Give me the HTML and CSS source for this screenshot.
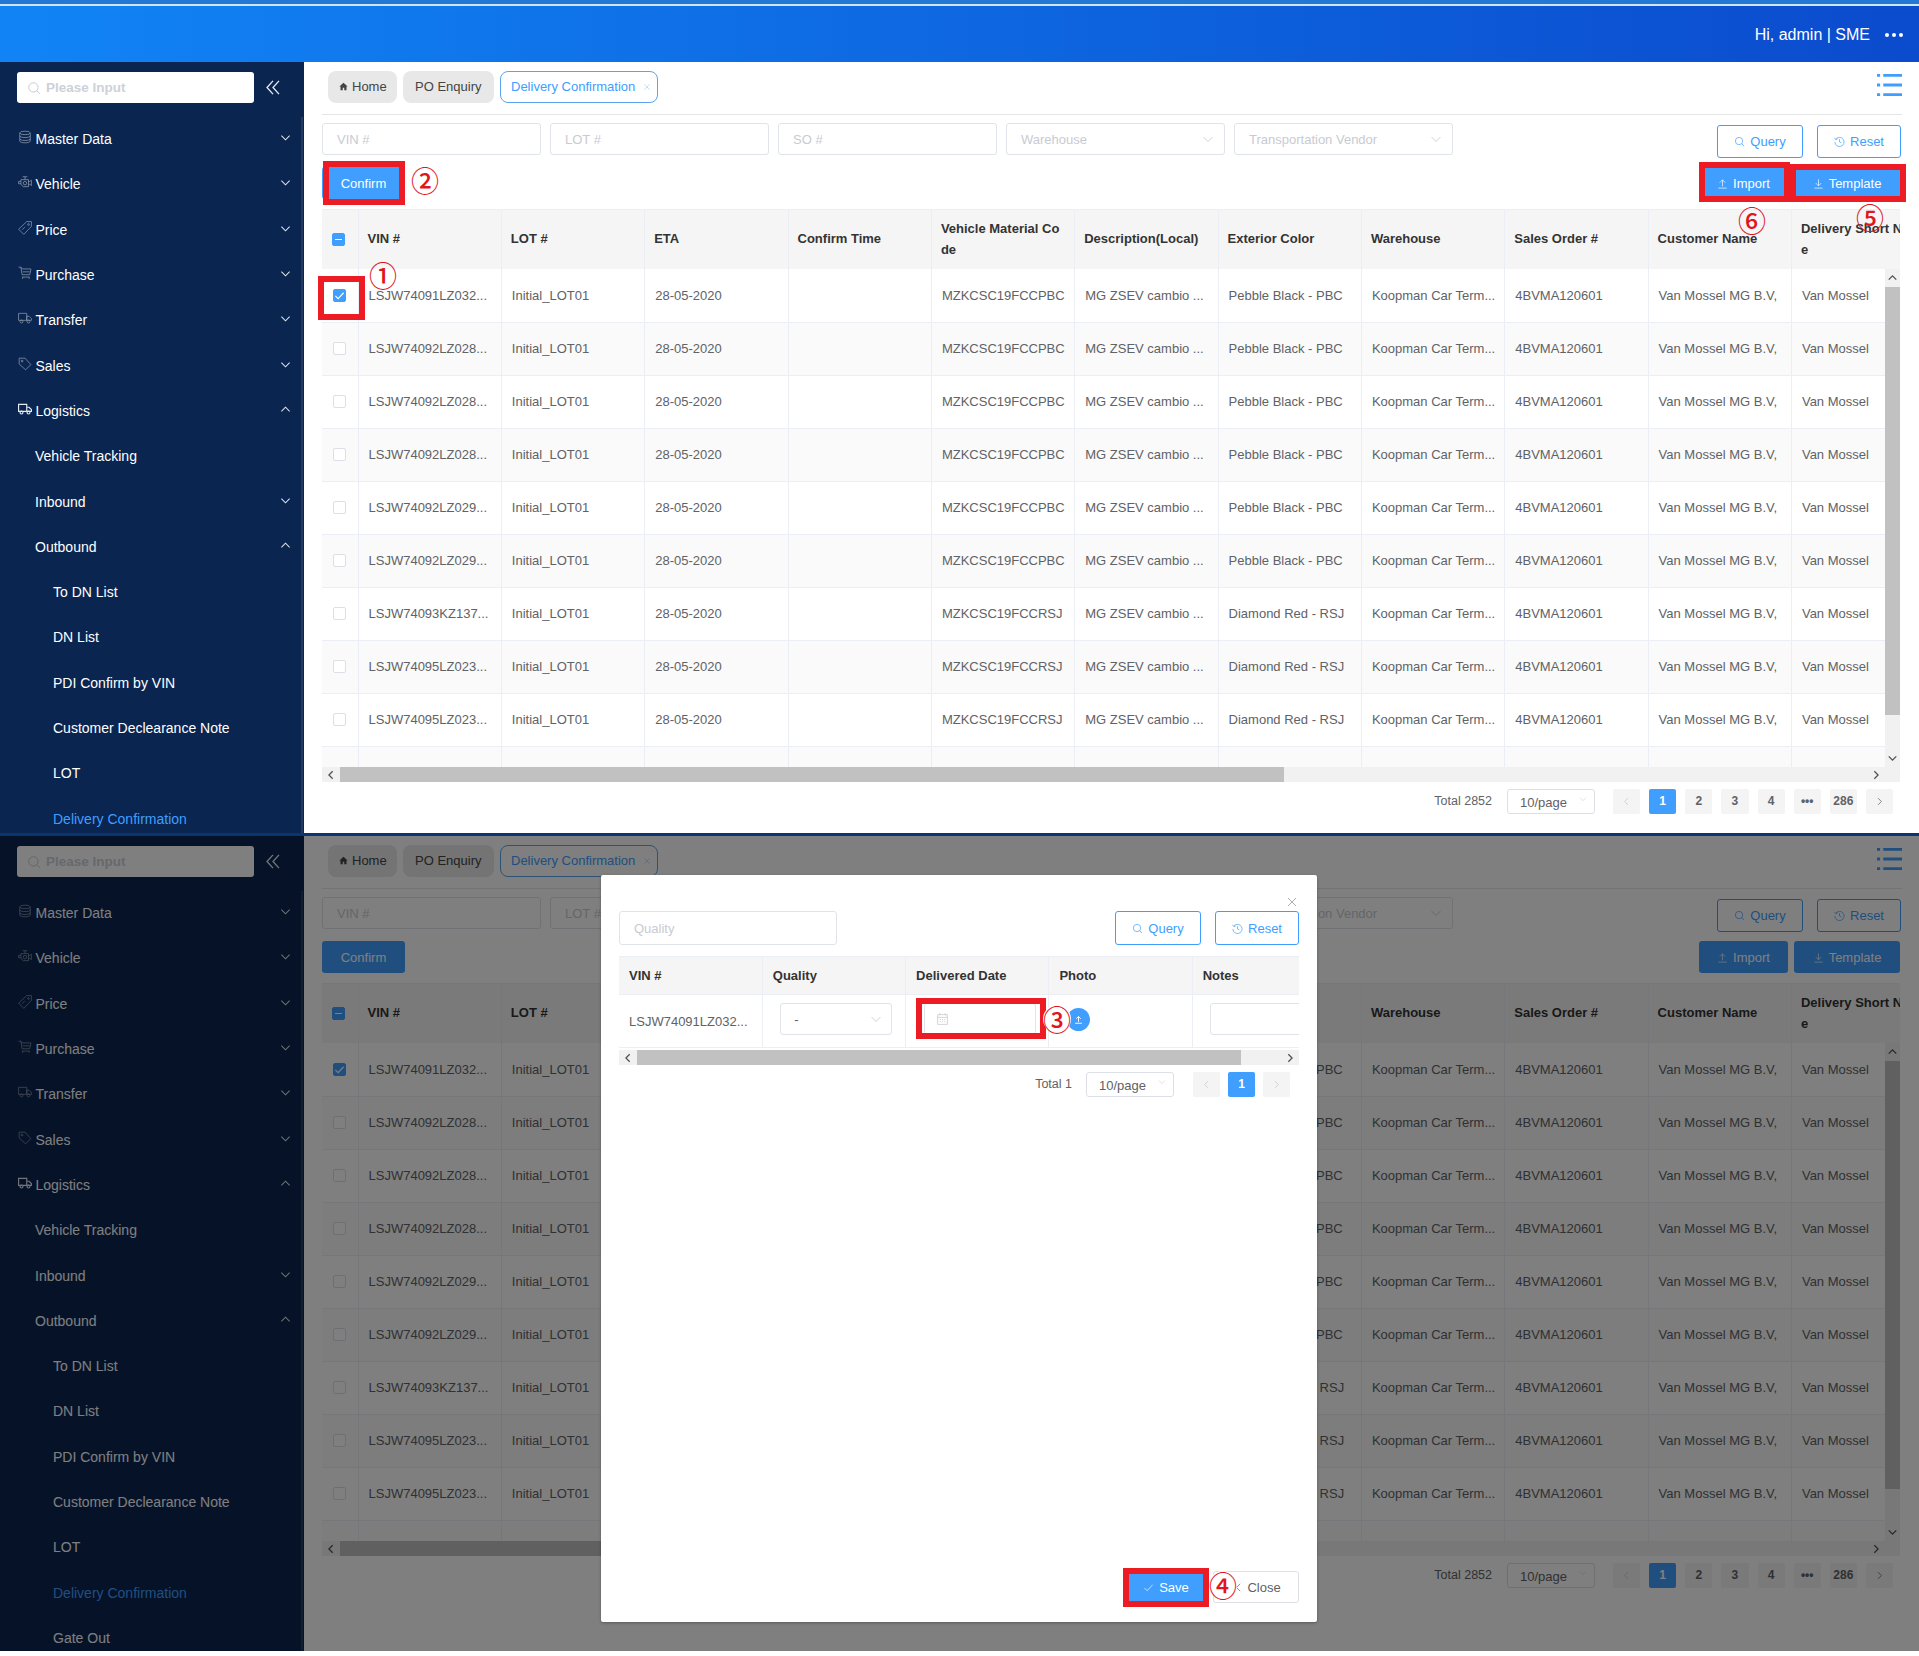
FILE: index.html
```html
<!DOCTYPE html>
<html>

<head>
    <title>Delivery Confirmation</title>
    <link rel="stylesheet" href="styles.css">
</head>

<body>
    <svg class="sprite" xmlns="http://www.w3.org/2000/svg">
        <symbol id="i-down" viewBox="0 0 24 24"><path d="M3 8l9 9 9-9" /></symbol>
        <symbol id="i-up" viewBox="0 0 24 24"><path d="M3 16l9-9 9 9" /></symbol>
        <symbol id="i-left" viewBox="0 0 24 24"><path d="M16 3l-9 9 9 9" /></symbol>
        <symbol id="i-right" viewBox="0 0 24 24"><path d="M8 3l9 9-9 9" /></symbol>
        <symbol id="i-fold" viewBox="0 0 24 24"><path d="M12 2L3 12l9 10M21 2l-9 10 9 10" /></symbol>
        <symbol id="i-search" viewBox="0 0 24 24"><circle cx="11" cy="11" r="8" /><path d="M17 17l5 5" /></symbol>
        <symbol id="i-db" viewBox="0 0 24 24"><ellipse cx="12" cy="5" rx="9" ry="3" /><path d="M3 5v14c0 1.700 4 3 9 3s9-1.300 9-3V5M3 10c0 1.700 4 3 9 3s9-1.300 9-3M3 15c0 1.700 4 3 9 3s9-1.300 9-3" /></symbol>
        <symbol id="i-engine" viewBox="0 0 24 24"><path d="M5 8h13v12H9l-4-4zM8 3h8M12 3v5M5 11H1v4h4M18 11h2l3-2v9l-3-2h-2" /><circle cx="12" cy="14" r="3" /></symbol>
        <symbol id="i-price" viewBox="0 0 24 24"><path d="M15 1h8v8L10 23 1 14z" /><circle cx="18" cy="6" r="1.500" /><path d="M7 15l5-5" /></symbol>
        <symbol id="i-cart" viewBox="0 0 24 24"><path d="M1 2h4l2 3h15v2l-2 8H7L5 2M7 19h13M8 19v3M19 19v3M8 10h12" /></symbol>
        <symbol id="i-truck" viewBox="0 0 24 24"><path d="M1 4h14v12H1zM15 9h4l4 4v3h-8z" /><circle cx="6" cy="18" r="2.500" /><circle cx="18" cy="18" r="2.500" /></symbol>
        <symbol id="i-tag" viewBox="0 0 24 24"><path d="M2 2h10l10 11-9 9L2 12z" /><circle cx="7" cy="7" r="1.500" /></symbol>
        <symbol id="i-home" viewBox="0 0 24 24"><path class="solid" d="M12 2L1 12h3v10h6v-7h4v7h6V12h3z" /></symbol>
        <symbol id="i-list" viewBox="0 0 24 24" preserveAspectRatio="none"><path class="solid" d="M0 1h3v3H0zM6 1h18v3H6zM0 11h3v3H0zM6 11h18v3H6zM0 21h3v3H0zM6 21h18v3H6z" /></symbol>
        <symbol id="i-history" viewBox="0 0 24 24"><path d="M4 7a10 10 0 1 1-2 6M1 4l3 4 4-2M12 7v6l4 2" /></symbol>
        <symbol id="i-upload" viewBox="0 0 24 24"><path d="M12 18V4M6 10l6-6 6 6M3 22h18" /></symbol>
        <symbol id="i-download" viewBox="0 0 24 24"><path d="M12 3v14M6 11l6 6 6-6M3 22h18" /></symbol>
        <symbol id="i-calendar" viewBox="0 0 24 24"><path d="M3 4h18v18H3zM3 9h18M7 1v4M17 1v4M7 13h2M11 13h2M15 13h2M7 17h2M11 17h2M15 17h2" /></symbol>
        <symbol id="i-check" viewBox="0 0 24 24"><path d="M3 13l6 6L21 6" /></symbol>
        <symbol id="i-close" viewBox="0 0 24 24"><path d="M4 4l16 16M20 4L4 20" /></symbol>
    </svg>

    <header class="topbar">
        <span>Hi, admin | SME</span>
        <span class="dots"><i></i><i></i><i></i></span>
    </header>

    <section class="screen screen-top">
        <aside class="sidebar">
            <div class="side-search">
                <div class="search-box">
                    <svg class="icon"><use href="#i-search" /></svg>
                    <input type="text" placeholder="Please Input">
                </div>
                <svg class="icon fold"><use href="#i-fold" /></svg>
            </div>
            <ul class="menu">
                <li><svg class="icon lead"><use href="#i-db" /></svg>Master Data<svg class="icon arrow"><use href="#i-down" /></svg></li>
                <li><svg class="icon lead"><use href="#i-engine" /></svg>Vehicle<svg class="icon arrow"><use href="#i-down" /></svg></li>
                <li><svg class="icon lead"><use href="#i-price" /></svg>Price<svg class="icon arrow"><use href="#i-down" /></svg></li>
                <li><svg class="icon lead"><use href="#i-cart" /></svg>Purchase<svg class="icon arrow"><use href="#i-down" /></svg></li>
                <li><svg class="icon lead"><use href="#i-truck" /></svg>Transfer<svg class="icon arrow"><use href="#i-down" /></svg></li>
                <li><svg class="icon lead"><use href="#i-tag" /></svg>Sales<svg class="icon arrow"><use href="#i-down" /></svg></li>
                <li class="open"><svg class="icon lead"><use href="#i-truck" /></svg>Logistics<svg class="icon arrow"><use href="#i-up" /></svg></li>
                <li class="sub">Vehicle Tracking</li>
                <li class="sub">Inbound<svg class="icon arrow"><use href="#i-down" /></svg></li>
                <li class="sub">Outbound<svg class="icon arrow"><use href="#i-up" /></svg></li>
                <li class="sub2">To DN List</li>
                <li class="sub2">DN List</li>
                <li class="sub2">PDI Confirm by VIN</li>
                <li class="sub2">Customer Declearance Note</li>
                <li class="sub2">LOT</li>
                <li class="sub2 active">Delivery Confirmation</li>
            </ul>
        </aside>

        <main class="content">
            <div class="tabbar">
                <span class="tab tab-home"><svg class="icon home"><use href="#i-home" /></svg>Home</span>
                <span class="tab tab-po">PO Enquiry</span>
                <span class="tab tab-active">Delivery Confirmation<svg class="icon"><use href="#i-close" /></svg></span>
                <svg class="icon list"><use href="#i-list" /></svg>
            </div>

            <div class="filters">
                <div class="field"><input type="text" placeholder="VIN #"></div>
                <div class="field"><input type="text" placeholder="LOT #"></div>
                <div class="field"><input type="text" placeholder="SO #"></div>
                <div class="field"><input type="text" placeholder="Warehouse"><svg class="icon"><use href="#i-down" /></svg></div>
                <div class="field"><input type="text" placeholder="Transportation Vendor"><svg class="icon"><use href="#i-down" /></svg></div>
                <button class="btn btn-plain push"><svg class="icon"><use href="#i-search" /></svg>Query</button>
                <button class="btn btn-plain btn-reset"><svg class="icon"><use href="#i-history" /></svg>Reset</button>
            </div>

            <div class="actions">
                <button class="btn btn-primary btn-confirm">Confirm</button>
                <button class="btn btn-primary btn-import push"><svg class="icon"><use href="#i-upload" /></svg>Import</button>
                <button class="btn btn-primary btn-template"><svg class="icon"><use href="#i-download" /></svg>Template</button>
            </div>

            <div class="grid">
                <div class="grid-head">
                    <table>
                        <tr><th class="col-check"><span class="check check-half"></span></th><th>VIN #</th><th>LOT #</th><th>ETA</th><th>Confirm Time</th><th>Vehicle Material Code</th><th>Description(Local)</th><th>Exterior Color</th><th>Warehouse</th><th>Sales Order #</th><th>Customer Name</th><th>Delivery Short Name</th></tr>
                    </table>
                </div>
                <div class="grid-main">
                    <div class="grid-body">
                        <table>
                            <tr><td class="col-check"><span class="check check-on"><svg class="icon"><use href="#i-check" /></svg></span></td><td>LSJW74091LZ032...</td><td>Initial_LOT01</td><td>28-05-2020</td><td></td><td>MZKCSC19FCCPBC</td><td>MG ZSEV cambio ...</td><td>Pebble Black - PBC</td><td>Koopman Car Term...</td><td>4BVMA120601</td><td>Van Mossel MG B.V,</td><td>Van Mossel</td></tr>
                            <tr><td class="col-check"><span class="check"></span></td><td>LSJW74092LZ028...</td><td>Initial_LOT01</td><td>28-05-2020</td><td></td><td>MZKCSC19FCCPBC</td><td>MG ZSEV cambio ...</td><td>Pebble Black - PBC</td><td>Koopman Car Term...</td><td>4BVMA120601</td><td>Van Mossel MG B.V,</td><td>Van Mossel</td></tr>
                            <tr><td class="col-check"><span class="check"></span></td><td>LSJW74092LZ028...</td><td>Initial_LOT01</td><td>28-05-2020</td><td></td><td>MZKCSC19FCCPBC</td><td>MG ZSEV cambio ...</td><td>Pebble Black - PBC</td><td>Koopman Car Term...</td><td>4BVMA120601</td><td>Van Mossel MG B.V,</td><td>Van Mossel</td></tr>
                            <tr><td class="col-check"><span class="check"></span></td><td>LSJW74092LZ028...</td><td>Initial_LOT01</td><td>28-05-2020</td><td></td><td>MZKCSC19FCCPBC</td><td>MG ZSEV cambio ...</td><td>Pebble Black - PBC</td><td>Koopman Car Term...</td><td>4BVMA120601</td><td>Van Mossel MG B.V,</td><td>Van Mossel</td></tr>
                            <tr><td class="col-check"><span class="check"></span></td><td>LSJW74092LZ029...</td><td>Initial_LOT01</td><td>28-05-2020</td><td></td><td>MZKCSC19FCCPBC</td><td>MG ZSEV cambio ...</td><td>Pebble Black - PBC</td><td>Koopman Car Term...</td><td>4BVMA120601</td><td>Van Mossel MG B.V,</td><td>Van Mossel</td></tr>
                            <tr><td class="col-check"><span class="check"></span></td><td>LSJW74092LZ029...</td><td>Initial_LOT01</td><td>28-05-2020</td><td></td><td>MZKCSC19FCCPBC</td><td>MG ZSEV cambio ...</td><td>Pebble Black - PBC</td><td>Koopman Car Term...</td><td>4BVMA120601</td><td>Van Mossel MG B.V,</td><td>Van Mossel</td></tr>
                            <tr><td class="col-check"><span class="check"></span></td><td>LSJW74093KZ137...</td><td>Initial_LOT01</td><td>28-05-2020</td><td></td><td>MZKCSC19FCCRSJ</td><td>MG ZSEV cambio ...</td><td>Diamond Red - RSJ</td><td>Koopman Car Term...</td><td>4BVMA120601</td><td>Van Mossel MG B.V,</td><td>Van Mossel</td></tr>
                            <tr><td class="col-check"><span class="check"></span></td><td>LSJW74095LZ023...</td><td>Initial_LOT01</td><td>28-05-2020</td><td></td><td>MZKCSC19FCCRSJ</td><td>MG ZSEV cambio ...</td><td>Diamond Red - RSJ</td><td>Koopman Car Term...</td><td>4BVMA120601</td><td>Van Mossel MG B.V,</td><td>Van Mossel</td></tr>
                            <tr><td class="col-check"><span class="check"></span></td><td>LSJW74095LZ023...</td><td>Initial_LOT01</td><td>28-05-2020</td><td></td><td>MZKCSC19FCCRSJ</td><td>MG ZSEV cambio ...</td><td>Diamond Red - RSJ</td><td>Koopman Car Term...</td><td>4BVMA120601</td><td>Van Mossel MG B.V,</td><td>Van Mossel</td></tr>
                            <tr><td class="col-check"></td><td></td><td></td><td></td><td></td><td></td><td></td><td></td><td></td><td></td><td></td><td></td></tr>
                        </table>
                    </div>
                    <div class="vbar">
                        <svg class="icon"><use href="#i-up" /></svg>
                        <div class="vbar-thumb"></div>
                        <svg class="icon"><use href="#i-down" /></svg>
                    </div>
                </div>
                <div class="hbar">
                    <svg class="icon"><use href="#i-left" /></svg>
                    <div class="hbar-thumb"></div>
                    <svg class="icon"><use href="#i-right" /></svg>
                </div>
            </div>

            <div class="pager">
                <span class="pager-total">Total 2852</span>
                <span class="pager-size">10/page<svg class="icon"><use href="#i-up" /></svg></span>
                <span class="page page-off"><svg class="icon"><use href="#i-left" /></svg></span>
                <span class="page page-on">1</span>
                <span class="page">2</span>
                <span class="page">3</span>
                <span class="page">4</span>
                <span class="page">•••</span>
                <span class="page">286</span>
                <span class="page"><svg class="icon"><use href="#i-right" /></svg></span>
            </div>
        </main>

        <div class="mark mark-row"></div>
        <div class="mark mark-confirm"></div>
        <div class="mark mark-import"></div>
        <div class="mark mark-template"></div>
        <span class="num num-1">①</span>
        <span class="num num-2">②</span>
        <span class="num num-6">⑥</span>
        <span class="num num-5">⑤</span>
    </section>

    <div class="divider"></div>

    <section class="screen screen-bottom">
        <aside class="sidebar">
            <div class="side-search">
                <div class="search-box">
                    <svg class="icon"><use href="#i-search" /></svg>
                    <input type="text" placeholder="Please Input">
                </div>
                <svg class="icon fold"><use href="#i-fold" /></svg>
            </div>
            <ul class="menu">
                <li><svg class="icon lead"><use href="#i-db" /></svg>Master Data<svg class="icon arrow"><use href="#i-down" /></svg></li>
                <li><svg class="icon lead"><use href="#i-engine" /></svg>Vehicle<svg class="icon arrow"><use href="#i-down" /></svg></li>
                <li><svg class="icon lead"><use href="#i-price" /></svg>Price<svg class="icon arrow"><use href="#i-down" /></svg></li>
                <li><svg class="icon lead"><use href="#i-cart" /></svg>Purchase<svg class="icon arrow"><use href="#i-down" /></svg></li>
                <li><svg class="icon lead"><use href="#i-truck" /></svg>Transfer<svg class="icon arrow"><use href="#i-down" /></svg></li>
                <li><svg class="icon lead"><use href="#i-tag" /></svg>Sales<svg class="icon arrow"><use href="#i-down" /></svg></li>
                <li class="open"><svg class="icon lead"><use href="#i-truck" /></svg>Logistics<svg class="icon arrow"><use href="#i-up" /></svg></li>
                <li class="sub">Vehicle Tracking</li>
                <li class="sub">Inbound<svg class="icon arrow"><use href="#i-down" /></svg></li>
                <li class="sub">Outbound<svg class="icon arrow"><use href="#i-up" /></svg></li>
                <li class="sub2">To DN List</li>
                <li class="sub2">DN List</li>
                <li class="sub2">PDI Confirm by VIN</li>
                <li class="sub2">Customer Declearance Note</li>
                <li class="sub2">LOT</li>
                <li class="sub2 active">Delivery Confirmation</li>
                <li class="sub2">Gate Out</li>
            </ul>
        </aside>

        <main class="content">
            <div class="tabbar">
                <span class="tab tab-home"><svg class="icon home"><use href="#i-home" /></svg>Home</span>
                <span class="tab tab-po">PO Enquiry</span>
                <span class="tab tab-active">Delivery Confirmation<svg class="icon"><use href="#i-close" /></svg></span>
                <svg class="icon list"><use href="#i-list" /></svg>
            </div>

            <div class="filters">
                <div class="field"><input type="text" placeholder="VIN #"></div>
                <div class="field"><input type="text" placeholder="LOT #"></div>
                <div class="field"><input type="text" placeholder="SO #"></div>
                <div class="field"><input type="text" placeholder="Warehouse"><svg class="icon"><use href="#i-down" /></svg></div>
                <div class="field"><input type="text" placeholder="Transportation Vendor"><svg class="icon"><use href="#i-down" /></svg></div>
                <button class="btn btn-plain push"><svg class="icon"><use href="#i-search" /></svg>Query</button>
                <button class="btn btn-plain btn-reset"><svg class="icon"><use href="#i-history" /></svg>Reset</button>
            </div>

            <div class="actions">
                <button class="btn btn-primary btn-confirm">Confirm</button>
                <button class="btn btn-primary btn-import push"><svg class="icon"><use href="#i-upload" /></svg>Import</button>
                <button class="btn btn-primary btn-template"><svg class="icon"><use href="#i-download" /></svg>Template</button>
            </div>

            <div class="grid">
                <div class="grid-head">
                    <table>
                        <tr><th class="col-check"><span class="check check-half"></span></th><th>VIN #</th><th>LOT #</th><th>ETA</th><th>Confirm Time</th><th>Vehicle Material Code</th><th>Description(Local)</th><th>Exterior Color</th><th>Warehouse</th><th>Sales Order #</th><th>Customer Name</th><th>Delivery Short Name</th></tr>
                    </table>
                </div>
                <div class="grid-main">
                    <div class="grid-body">
                        <table>
                            <tr><td class="col-check"><span class="check check-on"><svg class="icon"><use href="#i-check" /></svg></span></td><td>LSJW74091LZ032...</td><td>Initial_LOT01</td><td>28-05-2020</td><td></td><td>MZKCSC19FCCPBC</td><td>MG ZSEV cambio ...</td><td>Pebble Black - PBC</td><td>Koopman Car Term...</td><td>4BVMA120601</td><td>Van Mossel MG B.V,</td><td>Van Mossel</td></tr>
                            <tr><td class="col-check"><span class="check"></span></td><td>LSJW74092LZ028...</td><td>Initial_LOT01</td><td>28-05-2020</td><td></td><td>MZKCSC19FCCPBC</td><td>MG ZSEV cambio ...</td><td>Pebble Black - PBC</td><td>Koopman Car Term...</td><td>4BVMA120601</td><td>Van Mossel MG B.V,</td><td>Van Mossel</td></tr>
                            <tr><td class="col-check"><span class="check"></span></td><td>LSJW74092LZ028...</td><td>Initial_LOT01</td><td>28-05-2020</td><td></td><td>MZKCSC19FCCPBC</td><td>MG ZSEV cambio ...</td><td>Pebble Black - PBC</td><td>Koopman Car Term...</td><td>4BVMA120601</td><td>Van Mossel MG B.V,</td><td>Van Mossel</td></tr>
                            <tr><td class="col-check"><span class="check"></span></td><td>LSJW74092LZ028...</td><td>Initial_LOT01</td><td>28-05-2020</td><td></td><td>MZKCSC19FCCPBC</td><td>MG ZSEV cambio ...</td><td>Pebble Black - PBC</td><td>Koopman Car Term...</td><td>4BVMA120601</td><td>Van Mossel MG B.V,</td><td>Van Mossel</td></tr>
                            <tr><td class="col-check"><span class="check"></span></td><td>LSJW74092LZ029...</td><td>Initial_LOT01</td><td>28-05-2020</td><td></td><td>MZKCSC19FCCPBC</td><td>MG ZSEV cambio ...</td><td>Pebble Black - PBC</td><td>Koopman Car Term...</td><td>4BVMA120601</td><td>Van Mossel MG B.V,</td><td>Van Mossel</td></tr>
                            <tr><td class="col-check"><span class="check"></span></td><td>LSJW74092LZ029...</td><td>Initial_LOT01</td><td>28-05-2020</td><td></td><td>MZKCSC19FCCPBC</td><td>MG ZSEV cambio ...</td><td>Pebble Black - PBC</td><td>Koopman Car Term...</td><td>4BVMA120601</td><td>Van Mossel MG B.V,</td><td>Van Mossel</td></tr>
                            <tr><td class="col-check"><span class="check"></span></td><td>LSJW74093KZ137...</td><td>Initial_LOT01</td><td>28-05-2020</td><td></td><td>MZKCSC19FCCRSJ</td><td>MG ZSEV cambio ...</td><td>Diamond Red - RSJ</td><td>Koopman Car Term...</td><td>4BVMA120601</td><td>Van Mossel MG B.V,</td><td>Van Mossel</td></tr>
                            <tr><td class="col-check"><span class="check"></span></td><td>LSJW74095LZ023...</td><td>Initial_LOT01</td><td>28-05-2020</td><td></td><td>MZKCSC19FCCRSJ</td><td>MG ZSEV cambio ...</td><td>Diamond Red - RSJ</td><td>Koopman Car Term...</td><td>4BVMA120601</td><td>Van Mossel MG B.V,</td><td>Van Mossel</td></tr>
                            <tr><td class="col-check"><span class="check"></span></td><td>LSJW74095LZ023...</td><td>Initial_LOT01</td><td>28-05-2020</td><td></td><td>MZKCSC19FCCRSJ</td><td>MG ZSEV cambio ...</td><td>Diamond Red - RSJ</td><td>Koopman Car Term...</td><td>4BVMA120601</td><td>Van Mossel MG B.V,</td><td>Van Mossel</td></tr>
                            <tr><td class="col-check"></td><td></td><td></td><td></td><td></td><td></td><td></td><td></td><td></td><td></td><td></td><td></td></tr>
                        </table>
                    </div>
                    <div class="vbar">
                        <svg class="icon"><use href="#i-up" /></svg>
                        <div class="vbar-thumb"></div>
                        <svg class="icon"><use href="#i-down" /></svg>
                    </div>
                </div>
                <div class="hbar">
                    <svg class="icon"><use href="#i-left" /></svg>
                    <div class="hbar-thumb"></div>
                    <svg class="icon"><use href="#i-right" /></svg>
                </div>
            </div>

            <div class="pager">
                <span class="pager-total">Total 2852</span>
                <span class="pager-size">10/page<svg class="icon"><use href="#i-up" /></svg></span>
                <span class="page page-off"><svg class="icon"><use href="#i-left" /></svg></span>
                <span class="page page-on">1</span>
                <span class="page">2</span>
                <span class="page">3</span>
                <span class="page">4</span>
                <span class="page">•••</span>
                <span class="page">286</span>
                <span class="page"><svg class="icon"><use href="#i-right" /></svg></span>
            </div>
        </main>

        <div class="overlay"></div>

        <div class="modal">
            <svg class="icon modal-close"><use href="#i-close" /></svg>
            <div class="modal-search">
                <div class="field field-quality"><input type="text" placeholder="Quality"></div>
                <button class="btn btn-plain push"><svg class="icon"><use href="#i-search" /></svg>Query</button>
                <button class="btn btn-plain btn-reset"><svg class="icon"><use href="#i-history" /></svg>Reset</button>
            </div>
            <div class="modal-grid">
                <table>
                    <tr><th>VIN #</th><th>Quality</th><th>Delivered Date</th><th>Photo</th><th>Notes</th></tr>
                    <tr>
                        <td>LSJW74091LZ032...</td>
                        <td class="cell-form"><div class="field field-cell"><input type="text" value="-"><svg class="icon"><use href="#i-down" /></svg></div></td>
                        <td class="cell-form"><div class="field field-cell"><svg class="icon cal"><use href="#i-calendar" /></svg><input type="text"></div></td>
                        <td class="cell-form"><span class="upload"><svg class="icon"><use href="#i-upload" /></svg></span></td>
                        <td class="cell-form"><div class="field field-cell"><input type="text"></div></td>
                    </tr>
                </table>
            </div>
            <div class="hbar hbar-modal">
                <svg class="icon"><use href="#i-left" /></svg>
                <div class="hbar-thumb"></div>
                <svg class="icon"><use href="#i-right" /></svg>
            </div>
            <div class="pager pager-modal">
                <span class="pager-total">Total 1</span>
                <span class="pager-size">10/page<svg class="icon"><use href="#i-up" /></svg></span>
                <span class="page page-off"><svg class="icon"><use href="#i-left" /></svg></span>
                <span class="page page-on">1</span>
                <span class="page page-off"><svg class="icon"><use href="#i-right" /></svg></span>
            </div>
            <div class="modal-foot">
                <button class="btn btn-primary btn-save"><svg class="icon"><use href="#i-check" /></svg>Save</button>
                <button class="btn btn-close"><svg class="icon"><use href="#i-close" /></svg>Close</button>
            </div>
        </div>

        <div class="mark mark-date"></div>
        <div class="mark mark-save"></div>
        <span class="num num-3">③</span>
        <span class="num num-4">④</span>
    </section>
</body>

</html>
```
FILE: styles.css
```css
* {
    box-sizing: border-box;
}

body {
    margin: 0;
    height: 1656px;
    overflow: hidden;
    background: #fff;
    font-family: "Liberation Sans", Arial, sans-serif;
    font-size: 13px;
    color: #606266;
}

.sprite {
    display: none;
}

.icon {
    width: 14px;
    height: 14px;
    flex: none;
    fill: none;
    stroke: currentColor;
    stroke-width: 1.500;
}

.solid {
    fill: currentColor;
    stroke: none;
}

.topbar {
    height: 62px;
    display: flex;
    align-items: center;
    justify-content: flex-end;
    gap: 15px;
    padding: 8px 16px 0 0;
    background:
        linear-gradient(transparent 0 4px, #cfe5fb 4px 6px, transparent 6px),
        linear-gradient(#2378d6 0 4px, transparent 4px),
        linear-gradient(90deg, #1184f5, #0b4bcd);
    color: #fff;
    font-size: 16px;
}

.dots {
    display: flex;
    gap: 3px;
}

.dots i {
    width: 4px;
    height: 4px;
    border-radius: 50%;
    background: #fff;
}

.divider {
    height: 3px;
    background: #0b3473;
}

.screen {
    position: relative;
    display: flex;
    height: 771px;
    overflow: hidden;
}

.screen-bottom {
    height: 815px;
}

/* sidebar */
.sidebar {
    width: 304px;
    flex: none;
    background: #0a2550;
    color: #fff;
    font-size: 14px;
}

.side-search {
    display: flex;
    align-items: center;
    padding: 10px 0 13.500px 17px;
}

.search-box {
    width: 237px;
    height: 31px;
    display: flex;
    align-items: center;
    gap: 5px;
    padding-left: 10px;
    background: #fff;
    border-radius: 3px;
    color: #c0c4cc;
}

.search-box input {
    width: 180px;
    border: 0;
    outline: 0;
    padding: 0;
    font: bold 13.500px "Liberation Sans", Arial, sans-serif;
}

.search-box input::placeholder {
    color: #cdd1d7;
}

.fold {
    width: 16px;
    height: 17px;
    margin-left: 11px;
    color: #e6eaf0;
    stroke-width: 2;
}

.menu {
    list-style: none;
    margin: 0 1px 0 0;
    padding: 0;
    border-right: 2px solid #243a5e;
}

.menu li {
    height: 45.300px;
    display: flex;
    align-items: center;
    gap: 3.500px;
    padding: 0 10px 0 18px;
}

.menu .lead {
    margin-bottom: 4px;
    color: #8c98aa;
    stroke-width: 1.300;
}

.menu .open .lead {
    color: #e4e8ef;
    stroke-width: 2;
}

.menu .arrow {
    width: 11px;
    height: 11px;
    margin-left: auto;
    margin-bottom: 3px;
    color: #e6eaf0;
    stroke-width: 2.200;
}

.menu .sub {
    padding-left: 35px;
}

.menu .sub2 {
    padding-left: 53px;
}

.menu .active {
    color: #409eff;
}

/* main column */
.content {
    flex: 1;
    min-width: 0;
    padding: 0 17px 0 18px;
    background: #fff;
}

.tabbar {
    height: 53px;
    display: flex;
    align-items: center;
    gap: 6px;
    padding: 0 0 2px 6px;
    border-bottom: 1px solid #e6e6e6;
    color: #444;
}

.tab {
    height: 32px;
    display: flex;
    align-items: center;
    padding: 0 0 2px 11px;
    background: #e8e8e8;
    border-radius: 8px;
    white-space: nowrap;
}

.tab-home {
    width: 69px;
}

.tab-po {
    width: 91px;
    padding-left: 12px;
}

.home {
    width: 9px;
    height: 9px;
    margin-right: 4px;
    margin-top: 1px;
    color: #444;
}

.tab-active {
    width: 158px;
    padding: 0 10px 2px;
    background: #fff;
    border: 1px solid #5aa5ec;
    color: #409eff;
    justify-content: space-between;
}

.tab-active .icon {
    width: 8px;
    height: 8px;
    margin-right: -4px;
    margin-top: 2px;
    color: #8dbdec;
}

.list {
    width: 25px;
    height: 23px;
    margin-left: auto;
    margin-bottom: 5px;
    color: #409eff;
}

.filters {
    display: flex;
    align-items: flex-start;
    gap: 9px;
    margin-top: 8px;
    height: 35px;
    padding-right: 1px;
}

.field {
    width: 219px;
    height: 32px;
    display: flex;
    align-items: center;
    flex: none;
    padding: 0 14px;
    background: #fff;
    border: 1px solid #e0e3e9;
    border-radius: 3px;
}

.field input {
    width: 100%;
    min-width: 0;
    border: 0;
    outline: 0;
    padding: 0;
    background: transparent;
    font: 13px "Liberation Sans", Arial, sans-serif;
    color: #606266;
}

.field input::placeholder {
    color: #c8cbd2;
}

.field .icon {
    width: 12px;
    height: 12px;
    margin-right: -4px;
    color: #c0c4cc;
}

.btn {
    height: 33px;
    display: flex;
    align-items: center;
    justify-content: center;
    gap: 5px;
    flex: none;
    padding: 0;
    border-radius: 3px;
    font: 13px "Liberation Sans", Arial, sans-serif;
    cursor: pointer;
}

.btn .icon {
    width: 11px;
    height: 11px;
}

.btn-plain {
    width: 86px;
    margin-top: 2px;
    background: #fff;
    border: 1px solid #409eff;
    color: #409eff;
}

.btn-reset {
    width: 84px;
    margin-left: 5px;
}

.btn-primary {
    height: 32px;
    background: #409eff;
    border: 0;
    color: #fff;
}

.push {
    margin-left: auto;
}

.actions {
    display: flex;
    gap: 6px;
    margin-top: 9px;
    padding-right: 2px;
}

.btn-confirm {
    width: 83px;
}

.btn-import {
    width: 89px;
    margin-left: auto;
}

.btn-template {
    width: 106px;
}

/* data grid */
.grid {
    width: 1578px;
    margin-top: 10px;
}

.grid table {
    width: 1613.400px;
    table-layout: fixed;
    border-collapse: collapse;
}

.grid-head {
    height: 60px;
    overflow: hidden;
}

.grid th,
.modal-grid th {
    padding: 0 10px 2px 9px;
    background: #f5f5f5;
    border: 1px solid #ebeef5;
    border-left: 0;
    text-align: left;
    font-weight: bold;
    line-height: 21px;
    color: #333;
    word-break: break-all;
}

.grid th {
    height: 60px;
}

.grid td,
.modal-grid td {
    padding: 0 0 0 10px;
    border-right: 1px solid #ebeef5;
    border-bottom: 1px solid #ebeef5;
    white-space: nowrap;
    overflow: hidden;
}

.grid td {
    height: 53px;
}

.grid tr:nth-child(even) td {
    background: #fafafa;
}

.grid .col-check {
    width: 36px;
    padding: 0 0 0 11px;
}

.grid th.col-check {
    padding-left: 10px;
}

.check {
    display: block;
    width: 13px;
    height: 13px;
    background: #fff;
    border: 1px solid #dcdfe6;
    border-radius: 2px;
}

.check-on,
.check-half {
    position: relative;
    background: #409eff;
    border-color: #409eff;
    color: #fff;
}

.check-on .icon {
    display: block;
    width: 11px;
    height: 11px;
    stroke-width: 2.500;
}

.check-half::after {
    content: "";
    position: absolute;
    left: 2px;
    right: 2px;
    top: 5px;
    height: 1px;
    background: #fff;
}

.grid-main {
    display: flex;
    height: 498px;
}

.grid-body {
    width: 1563px;
    height: 498px;
    overflow: hidden;
}

.vbar {
    width: 15px;
    display: flex;
    flex-direction: column;
    background: #f1f1f1;
    color: #505050;
}

.vbar .icon {
    width: 15px;
    height: 10px;
    margin: 4px 0;
    stroke-width: 3;
}

.vbar-thumb {
    height: 430px;
    margin-bottom: 34px;
    background: #c1c1c1;
}

.hbar {
    height: 15px;
    display: flex;
    align-items: center;
    background: #f1f1f1;
    color: #505050;
}

.hbar .icon {
    width: 10px;
    height: 10px;
    margin: 0 4px;
    stroke-width: 3;
}

.hbar-thumb {
    width: 944px;
    height: 15px;
    background: #c1c1c1;
}

.hbar .icon:last-child {
    margin-left: auto;
    margin-right: 19px;
}

.pager {
    display: flex;
    align-items: center;
    justify-content: flex-end;
    gap: 9px;
    height: 25px;
    margin-top: 7px;
    padding-right: 9px;
}

.pager-total {
    margin-right: 6px;
    padding-bottom: 2px;
    font-size: 12.500px;
}

.pager-size {
    position: relative;
    width: 88px;
    height: 25px;
    display: flex;
    align-items: center;
    padding: 2px 0 0 12px;
    margin-right: 9px;
    background: #fff;
    border: 1px solid #dcdfe6;
    border-radius: 3px;
}

.pager-size .icon {
    position: absolute;
    right: 7px;
    top: 5px;
    width: 8px;
    height: 8px;
    color: #c0c4cc;
    transform: rotate(180deg);
}

.page {
    width: 27.140px;
    height: 25px;
    display: flex;
    align-items: center;
    justify-content: center;
    padding-bottom: 1px;
    background: #f4f4f5;
    border-radius: 2px;
    font-weight: bold;
    font-size: 12px;
    color: #606266;
}

.page .icon {
    width: 9px;
    height: 9px;
    stroke-width: 2;
}

.page-off .icon {
    color: #c0c4cc;
}

.page-on {
    background: #409eff;
    color: #fff;
}

/* dialog */
.overlay {
    position: absolute;
    inset: 0;
    background: rgba(0, 0, 0, 0.5);
}

.modal {
    position: absolute;
    left: 601px;
    top: 39px;
    width: 716px;
    height: 747px;
    display: flex;
    flex-direction: column;
    padding: 36px 18px 19px;
    background: #fff;
    border-radius: 2px;
    box-shadow: 0 1px 3px rgba(0, 0, 0, 0.3);
}

.modal-close {
    position: absolute;
    right: 19px;
    top: 21px;
    width: 12px;
    height: 12px;
    color: #909399;
}

.modal-search {
    display: flex;
    align-items: flex-start;
    gap: 9px;
    height: 34px;
}

.modal-search .btn {
    margin-top: 0;
    height: 34px;
}

.field-quality {
    width: 218px;
    height: 34px;
}

.modal-grid {
    width: 680px;
    margin-top: 11px;
    overflow: hidden;
}

.modal-grid table {
    width: 717px;
    table-layout: fixed;
    border-collapse: collapse;
}

.modal-grid th {
    height: 38px;
    padding-left: 10px;
    padding-bottom: 0;
}

.modal-grid td {
    height: 53px;
}

.modal-grid td.cell-form {
    padding: 0 0 4px 17.500px;
}

.field-cell {
    width: 112px;
    height: 32px;
    padding: 0 13px;
}

.field-cell .cal {
    width: 13px;
    height: 14px;
    margin: 0 6px 0 -2px;
    stroke-width: 1.300;
}

.upload {
    width: 23px;
    height: 23px;
    display: flex;
    align-items: center;
    justify-content: center;
    background: #409eff;
    border-radius: 50%;
    color: #fff;
}

.upload .icon {
    width: 9px;
    height: 9px;
    stroke-width: 2.500;
}

.hbar-modal {
    margin-top: 2px;
}

.hbar-modal .hbar-thumb {
    width: 604px;
}

.hbar-modal .icon:last-child {
    margin-right: 4px;
}

.pager-modal {
    gap: 8px;
    margin-top: 7px;
}

.pager-modal .page {
    width: 27px;
}

.pager-modal .pager-size {
    margin-right: 11px;
}

.modal-foot {
    display: flex;
    justify-content: flex-end;
    gap: 4px;
    margin-top: auto;
}

.btn-save {
    width: 86px;
}

.btn-close {
    width: 86px;
    height: 32px;
    background: #fff;
    border: 1px solid #dcdfe6;
    color: #606266;
}

/* red annotations drawn over the shots */
.mark {
    position: absolute;
    border: 6px solid #ed1c24;
    pointer-events: none;
}

.mark-row {
    left: 318px;
    top: 214px;
    width: 47px;
    height: 44px;
}

.mark-confirm {
    left: 323px;
    top: 99px;
    width: 82px;
    height: 44px;
}

.mark-import {
    left: 1699px;
    top: 100px;
    width: 91px;
    height: 40px;
}

.mark-template {
    left: 1790px;
    top: 102px;
    width: 116px;
    height: 38px;
}

.mark-date {
    left: 916px;
    top: 162px;
    width: 130px;
    height: 41px;
}

.mark-save {
    left: 1123px;
    top: 732px;
    width: 86px;
    height: 39px;
}

.num {
    position: absolute;
    width: 28px;
    height: 28px;
    font: 500 28px/28px "Noto Sans CJK SC", "DejaVu Sans", sans-serif;
    text-align: center;
    color: #e0151d;
}

.num-1 {
    left: 369px;
    top: 199px;
}

.num-2 {
    left: 411px;
    top: 104px;
}

.num-6 {
    left: 1738px;
    top: 144px;
}

.num-5 {
    left: 1856px;
    top: 141px;
}

.num-3 {
    left: 1043px;
    top: 169px;
}

.num-4 {
    left: 1209px;
    top: 735px;
}

.num-3,
.num-4 {
    background: #fff;
    border-radius: 50%;
}
```
